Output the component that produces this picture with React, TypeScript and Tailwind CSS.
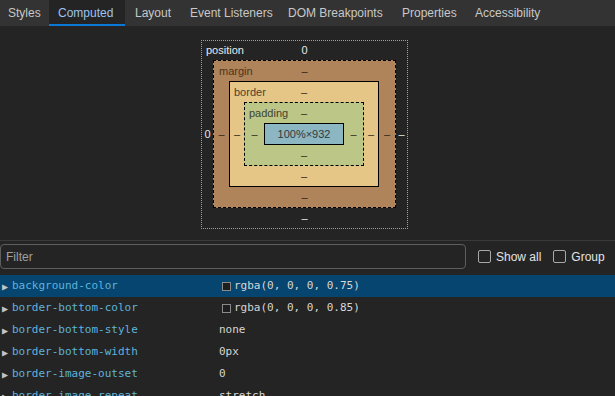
import React from "react";

const tabs = [
  { label: "Styles", cls: "w-[49px] pl-[8px]" },
  { label: "Computed", cls: "w-[76px] pl-[9px]" },
  { label: "Layout", cls: "w-[55px] pl-[10px]" },
  { label: "Event Listeners", cls: "w-[98px] pl-[10px]" },
  { label: "DOM Breakpoints", cls: "w-[114px] pl-[10px]" },
  { label: "Properties", cls: "w-[73px] pl-[10px]" },
  { label: "Accessibility", cls: "pl-[10px] pr-[10px]" },
];

type Prop = { name: string; value: string; swatch?: boolean };

const props: Prop[] = [
  { name: "background-color", value: "rgba(0, 0, 0, 0.75)", swatch: true },
  { name: "border-bottom-color", value: "rgba(0, 0, 0, 0.85)", swatch: true },
  { name: "border-bottom-style", value: "none" },
  { name: "border-bottom-width", value: "0px" },
  { name: "border-image-outset", value: "0" },
  { name: "border-image-repeat", value: "stretch" },
];

const Dash = () => <span>–</span>;

const BoxModel = () => {
  return (
    <div className="flex justify-center pr-[6px] pt-[14px] text-[11px] leading-none">
      {/* position */}
      <div className="flex w-[207px] flex-col border border-dotted border-[#a0a0a0] text-[#e8e8e8]">
        <div className="grid h-[19px] grid-cols-3 items-center">
          <span className="pl-[4px]">position</span>
          <span className="text-center">0</span>
          <span />
        </div>
        <div className="flex items-center">
          <div className="w-[11px] text-center">0</div>
          {/* margin */}
          <div className="flex w-[183px] flex-col border border-dashed border-black bg-[#b0845a] text-[#2e2418]">
            <div className="grid h-[20px] grid-cols-3 items-center">
              <span className="pl-[5px] text-[#4a3520]">margin</span>
              <span className="text-center">
                <Dash />
              </span>
              <span />
            </div>
            <div className="flex items-center">
              <div className="w-[15px] text-center">
                <Dash />
              </div>
              {/* border */}
              <div className="flex w-[150px] flex-col border border-black bg-[#e5c687] text-[#2f2a20]">
                <div className="grid h-[20px] grid-cols-3 items-center">
                  <span className="pl-[4px] text-[#4b4232]">border</span>
                  <span className="text-center">
                    <Dash />
                  </span>
                  <span />
                </div>
                <div className="flex items-center">
                  <div className="w-[14px] text-center">
                    <Dash />
                  </div>
                  {/* padding */}
                  <div className="flex w-[120px] flex-col border border-dashed border-black bg-[#bcc686] text-[#2a2e20]">
                    <div className="grid h-[20px] grid-cols-3 items-center">
                      <span className="pl-[4px] text-[#3e4430]">padding</span>
                      <span className="text-center">
                        <Dash />
                      </span>
                      <span />
                    </div>
                    <div className="flex items-center">
                      <div className="w-[19px] text-center">
                        <Dash />
                      </div>
                      <div className="flex h-[22px] w-[80px] items-center justify-center border border-black bg-[#8cb6c1] text-[#303a3e]">
                        100%×932
                      </div>
                      <div className="flex-1 text-center">
                        <Dash />
                      </div>
                    </div>
                    <div className="flex h-[20px] items-center justify-center">
                      <Dash />
                    </div>
                  </div>
                  <div className="flex-1 text-center">
                    <Dash />
                  </div>
                </div>
                <div className="flex h-[20px] items-center justify-center">
                  <Dash />
                </div>
              </div>
              <div className="flex-1 text-center">
                <Dash />
              </div>
            </div>
            <div className="flex h-[20px] items-center justify-center">
              <Dash />
            </div>
          </div>
          <div className="flex-1 text-center">
            <Dash />
          </div>
        </div>
        <div className="flex h-[20px] items-center justify-center">
          <Dash />
        </div>
      </div>
    </div>
  );
};

export default function App() {
  return (
    <div
      className="h-[396px] w-[615px] overflow-hidden bg-[#242424]"
      style={{ fontFamily: '"Liberation Sans", Arial, sans-serif' }}
    >
      {/* tabs */}
      <div className="flex h-[26px] bg-[#333333] text-[12px]">
        {tabs.map((t) => (
          <div
            key={t.label}
            className={`flex h-full shrink-0 items-center whitespace-nowrap ${t.cls} ${
              t.label === "Computed"
                ? "border-b-2 border-[#0a78d6] bg-[#242424] pt-[2px] text-[#9cc3f0]"
                : "text-[#c8c8c8]"
            }`}
          >
            {t.label}
          </div>
        ))}
      </div>

      <BoxModel />

      {/* filter */}
      <div className="mt-[11px] flex h-[35px] items-start border-t border-[#3a3a3a] pt-[3px] text-[12px]">
        <div className="flex h-[25px] w-[466px] items-center rounded-[4px] border border-[#5e5e5e] pl-[5px] text-[#a0a0a0]">
          Filter
        </div>
        <label className="ml-[12px] flex h-[25px] items-center text-[#e3e3e3]">
          <span className="mr-[5px] h-[13px] w-[13px] rounded-[2px] border border-[#a8a8a8]" />
          Show all
        </label>
        <label className="ml-[12px] flex h-[25px] items-center text-[#e3e3e3]">
          <span className="mr-[5px] h-[13px] w-[13px] rounded-[2px] border border-[#a8a8a8]" />
          Group
        </label>
      </div>

      {/* properties */}
      <div style={{ fontFamily: '"DejaVu Sans Mono", "Liberation Mono", monospace' }} className="text-[11px]">
        {props.map((p, i) => (
          <div
            key={p.name}
            className={`flex h-[22px] items-center ${i === 0 ? "bg-[#064570]" : ""}`}
          >
            <span className="w-[12px] pl-[2px] text-[10px] text-[#c4c4c4]">▶</span>
            <span className="w-[207px] text-[#5fb3dc]">{p.name}</span>
            <span className="flex items-center text-[#d6d6d6]">
              {p.swatch && (
                <span className="ml-[3px] mr-[3px] h-[9px] w-[9px] border border-[#8a8a8a] bg-[#1e1e1e]" />
              )}
              {p.value}
            </span>
          </div>
        ))}
      </div>
    </div>
  );
}
